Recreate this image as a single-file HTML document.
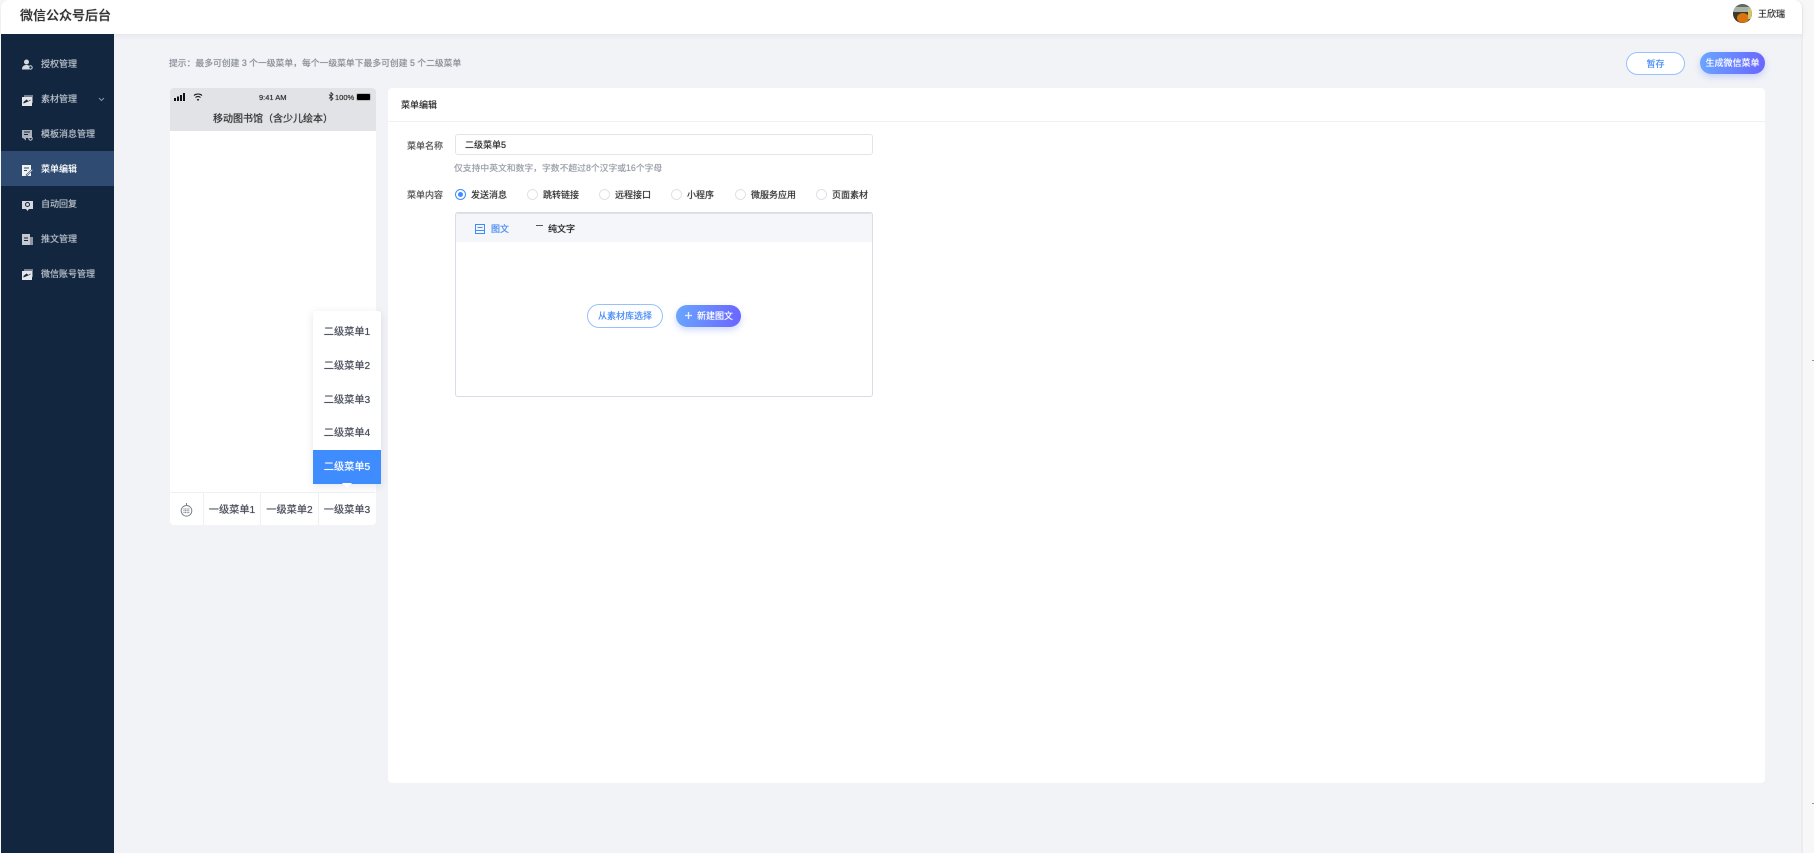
<!DOCTYPE html>
<html lang="zh"><head><meta charset="utf-8"><title>微信公众号后台</title>
<style>
*{box-sizing:border-box}
html,body{margin:0;padding:0}
body{width:1814px;height:853px;overflow:hidden;position:relative;background:#f7f7f7;font-family:"Liberation Sans","Noto Sans CJK SC",sans-serif;font-size:9px;color:#333;text-shadow:0 0 .6px currentColor}
.a{position:absolute;white-space:nowrap}
#main{left:1px;top:0;width:1802px;height:853px;background:#f2f3f7;border-right:2px solid #ececee;border-radius:8px 8px 0 0;overflow:hidden}
#head{left:1px;top:0;width:1801px;height:34px;background:#fff;border-radius:8px 8px 0 0;box-shadow:0 2px 6px rgba(40,50,80,.07);z-index:2}
#side{left:1px;top:34px;width:113px;height:819px;background:#12263f}
.mi{left:41px;font-size:9px;line-height:14px;color:#b9c0ca;z-index:3}
.ic{left:22px;width:11px;height:11px;z-index:3}
.btn{border-radius:14px;text-align:center;font-size:9px}
.o{border:1px solid #97c1fb;background:#fff;color:#4a8cf5}
.g{background:linear-gradient(100deg,#69a7ff,#6a64ff);color:#fff;box-shadow:0 3px 7px rgba(90,130,255,.3)}
.sm{left:313px;width:68px;height:34px;line-height:34px;text-align:center;font-size:10.2px;color:#4a4f5c;z-index:5}
.tab{top:492px;height:33px;line-height:35px;text-align:center;font-size:10.2px;color:#4a4f5c;background:#fff;border-left:1px solid #eef0f3}
.lb{font-size:9px;color:#555}
.r{width:11px;height:11px;border:1px solid #dfe2e8;border-radius:50%;background:#fff;top:189px}
.rt{top:188px;font-size:9px;line-height:14px;color:#333}
</style></head><body>
<div class="a" id="main"></div>
<div class="a" id="head"></div>
<div class="a" style="left:20px;top:6px;font-size:13px;line-height:19px;color:#333;font-weight:500;z-index:3">微信公众号后台</div>
<svg class="a" style="left:1733px;top:4px;z-index:3" width="19" height="19" viewBox="0 0 19 19"><defs><clipPath id="c"><circle cx="9.5" cy="9.5" r="9.5"/></clipPath></defs><g clip-path="url(#c)"><rect width="19" height="19" fill="#5c6a60"/><rect y="3" width="19" height="5" fill="#a8b4a8"/><rect y="8" width="19" height="11" fill="#3d3a2c"/><ellipse cx="10" cy="14" rx="6" ry="5" fill="#d9740f"/><rect x="15" y="5" width="4" height="10" fill="#d8c468"/></g></svg>
<div class="a" style="left:1758px;top:7px;font-size:9px;line-height:14px;color:#333;z-index:3">王欣瑞</div>

<div class="a" id="side"></div>
<div class="a" style="left:1px;top:151px;width:113px;height:35px;background:#2f4b72"></div>
<div class="a mi" style="top:57px">授权管理</div>
<div class="a mi" style="top:92px">素材管理</div>
<div class="a mi" style="top:127px">模板消息管理</div>
<div class="a mi" style="top:162px;color:#fff">菜单编辑</div>
<div class="a mi" style="top:197px">自动回复</div>
<div class="a mi" style="top:232px">推文管理</div>
<div class="a mi" style="top:267px">微信账号管理</div>
<svg class="a" style="left:98px;top:97px;z-index:3" width="7" height="5" viewBox="0 0 7 5"><path d="M1 1l2.5 2.5L6 1" fill="none" stroke="#8894a4" stroke-width="1"/></svg>
<svg class="a ic" style="top:59px" viewBox="0 0 11 11"><circle cx="4.5" cy="3" r="2.5" fill="#d5d8de"/><path d="M0 10.500C0 7 2 6 4.500 6S7 7 7 8v2.500z" fill="#d5d8de"/><circle cx="8.500" cy="8.500" r="1.700" fill="none" stroke="#d5d8de"/></svg>
<svg class="a ic" style="top:95px" viewBox="0 0 11 11"><rect x="2" y="0" width="9" height="8" fill="#77808e"/><rect x="0" y="2" width="10" height="9" fill="#e4e6ea"/><path d="M1.500 7l3-2.500 2 1.500 2-1.500v1l-7 3z" fill="#12263f"/></svg>
<svg class="a ic" style="top:130px" viewBox="0 0 11 11"><rect x="0" y="0" width="10" height="8" fill="#aab0ba"/><path d="M2 2h6M2 4.500h4" stroke="#12263f"/><path d="M1 8h3v2.500z" fill="#aab0ba"/><circle cx="8.500" cy="8.500" r="1.700" fill="none" stroke="#c4c8d0"/></svg>
<svg class="a ic" style="top:165px;z-index:3" viewBox="0 0 11 11"><rect x="0" y="0" width="9" height="11" fill="#f2f3f5"/><path d="M2 3h5M2 5.500h3" stroke="#2f4b72"/><path d="M4 10l6-6 1 1-6 6z" fill="#f2f3f5" stroke="#2f4b72" stroke-width=".6"/></svg>
<svg class="a ic" style="top:200px" viewBox="0 0 11 11"><rect x="0" y="1" width="11" height="8" fill="#d5d8de"/><circle cx="5.500" cy="4.500" r="2" fill="none" stroke="#12263f"/><path d="M4 9h3l-1.500 2z" fill="#d5d8de"/></svg>
<svg class="a ic" style="top:234px" viewBox="0 0 11 11"><rect x="0" y="0" width="8" height="11" fill="#c4c8d0"/><rect x="8" y="3" width="3" height="8" fill="#8f97a4"/><path d="M2 4h4M2 6.500h4" stroke="#12263f"/></svg>
<svg class="a ic" style="top:269px" viewBox="0 0 11 11"><rect x="2" y="0" width="9" height="8" fill="#77808e"/><rect x="0" y="2" width="10" height="9" fill="#e4e6ea"/><path d="M1.500 7l3-2.500 2 1.500 2-1.500v1l-7 3z" fill="#12263f"/></svg>

<div class="a" style="left:169px;top:55.500px;font-size:8.8px;line-height:14px;color:#8a8e98">提示：最多可创建 3 个一级菜单，每个一级菜单下最多可创建 5 个二级菜单</div>
<div class="a btn o" style="left:1626px;top:52px;width:59px;height:23px;line-height:23px">暂存</div>
<div class="a btn g" style="left:1700px;top:52px;width:65px;height:22px;line-height:23px">生成微信菜单</div>

<div class="a" style="left:170px;top:88px;width:206px;height:437px;background:#fff;border-radius:4px"></div>
<div class="a" style="left:170px;top:88px;width:206px;height:43px;background:#e2e3e7;border-radius:4px 4px 0 0"></div>
<svg class="a" style="left:174px;top:92px" width="34" height="10" viewBox="0 0 34 10"><path d="M0 6h2v3H0zM3 4.500h2V9H3zM6 3h2v6H6zM9 1h2v8H9z" fill="#111"/><path d="M20 3.500c2-2 6-2 8 0M21.500 5.500c1.200-1.200 3.800-1.200 5 0" fill="none" stroke="#111" stroke-width="1.100"/><path d="M24 9l-1.300-1.600c.8-.6 1.800-.6 2.600 0z" fill="#111"/></svg>
<div class="a" style="left:259px;top:92px;font-size:7.5px;line-height:11px;color:#333">9:41 AM</div>
<svg class="a" style="left:328px;top:92px" width="6" height="9" viewBox="0 0 6 9"><path d="M1 2.500l4 4L3 8.500V.5l2 2-4 4" fill="none" stroke="#222" stroke-width=".8"/></svg>
<div class="a" style="left:335px;top:92px;font-size:7.5px;line-height:11px;color:#333">100%</div>
<div class="a" style="left:357px;top:94px;width:13px;height:6px;background:#000;border-radius:1px;box-shadow:0 0 0 1px #bbb"></div>
<div class="a" style="left:170px;top:111px;width:206px;text-align:center;font-size:10px;line-height:18px;color:#333">移动图书馆（含少儿绘本）</div>

<div class="a tab" style="left:170px;width:33px;border-left:0;border-radius:0 0 0 4px;border-top:1px solid #eef0f3"></div>
<svg class="a" style="left:180px;top:502px" width="13" height="15" viewBox="0 0 13 15"><circle cx="6.500" cy="8.800" r="5.300" fill="none" stroke="#7c808a"/><path d="M6.500 1v2.500" stroke="#7c808a"/><path d="M3.500 7h6M3.500 8.800h6M3.500 10.600h6" stroke="#6c707a" stroke-dasharray="1 .6"/></svg>
<div class="a tab" style="left:203px;width:57px;border-top:1px solid #eef0f3">一级菜单1</div>
<div class="a tab" style="left:260px;width:58px;border-top:1px solid #eef0f3">一级菜单2</div>
<div class="a tab" style="left:318px;width:57px;border-top:1px solid #eef0f3;border-radius:0 0 4px 0">一级菜单3</div>

<div class="a" style="left:313px;top:311px;width:68px;height:173px;background:#fff;border-radius:3px 3px 0 0;box-shadow:0 2px 8px rgba(60,80,120,.14);z-index:4"></div>
<div class="a sm" style="top:316px">二级菜单1</div>
<div class="a sm" style="top:350px">二级菜单2</div>
<div class="a sm" style="top:384px">二级菜单3</div>
<div class="a sm" style="top:417px">二级菜单4</div>
<div class="a" style="left:313px;top:450px;width:68px;height:34px;background:#3f8cff;z-index:4"></div>
<div class="a sm" style="top:451px;color:#fff">二级菜单5</div>
<div class="a" style="left:342px;top:483px;width:0;height:0;border-left:5px solid transparent;border-right:5px solid transparent;border-top:5px solid #fff;z-index:6"></div>

<div class="a" style="left:388px;top:88px;width:1377px;height:695px;background:#fff;border-radius:4px"></div>
<div class="a" style="left:388px;top:121px;width:1377px;height:1px;background:#f0f1f4"></div>
<div class="a" style="left:401px;top:98px;font-size:9px;line-height:14px;color:#333">菜单编辑</div>
<div class="a lb" style="left:407px;top:139px;line-height:14px">菜单名称</div>
<div class="a" style="left:455px;top:134px;width:418px;height:21px;border:1px solid #e2e4ea;border-radius:3px;background:#fff;font-size:9px;line-height:20px;padding-left:9px;color:#333">二级菜单5</div>
<div class="a" style="left:454px;top:161px;font-size:8.8px;line-height:14px;color:#9a9ea8">仅支持中英文和数字，字数不超过8个汉字或16个字母</div>
<div class="a lb" style="left:407px;top:188px;line-height:14px">菜单内容</div>
<div class="a r" style="left:455px;border-color:#3f8cff"></div>
<div class="a" style="left:458px;top:192px;width:5px;height:5px;border-radius:50%;background:#3f8cff"></div>
<div class="a rt" style="left:471px">发送消息</div>
<div class="a r" style="left:527px"></div><div class="a rt" style="left:543px">跳转链接</div>
<div class="a r" style="left:599px"></div><div class="a rt" style="left:615px">远程接口</div>
<div class="a r" style="left:671px"></div><div class="a rt" style="left:687px">小程序</div>
<div class="a r" style="left:735px"></div><div class="a rt" style="left:751px">微服务应用</div>
<div class="a r" style="left:816px"></div><div class="a rt" style="left:832px">页面素材</div>

<div class="a" style="left:455px;top:212px;width:418px;height:185px;border:1px solid #d9dce4;border-radius:3px;background:#fff"></div>
<div class="a" style="left:456px;top:213px;width:416px;height:29px;background:#f5f6fa;border-top:1px solid #dfe2e8"></div>
<svg class="a" style="left:475px;top:224px" width="10" height="10" viewBox="0 0 10 10"><rect x=".5" y=".5" width="9" height="9" fill="none" stroke="#3f8cff"/><path d="M2.500 3.500h5M1 6.500h8" stroke="#3f8cff"/></svg>
<div class="a" style="left:491px;top:222px;font-size:9px;line-height:14px;color:#4a8cf5">图文</div>
<div class="a" style="left:536px;top:225px;width:7px;height:1px;background:#555"></div>
<div class="a" style="left:548px;top:222px;font-size:9px;line-height:14px;color:#222">纯文字</div>
<div class="a btn o" style="left:587px;top:304px;width:76px;height:24px;line-height:23px">从素材库选择</div>
<div class="a btn g" style="left:676px;top:305px;width:65px;height:22px;line-height:23px;padding-left:21px;text-align:left">新建图文</div>
<svg class="a" style="left:684px;top:311px" width="9" height="9" viewBox="0 0 9 9"><path d="M4.500 1v7M1 4.500h7" stroke="#e8eeff" stroke-width="1.300"/></svg>

<div class="a" style="left:1812px;top:360px;width:2px;height:1px;background:#999"></div>
<div class="a" style="left:1812px;top:803px;width:2px;height:1px;background:#999"></div>
</body></html>
